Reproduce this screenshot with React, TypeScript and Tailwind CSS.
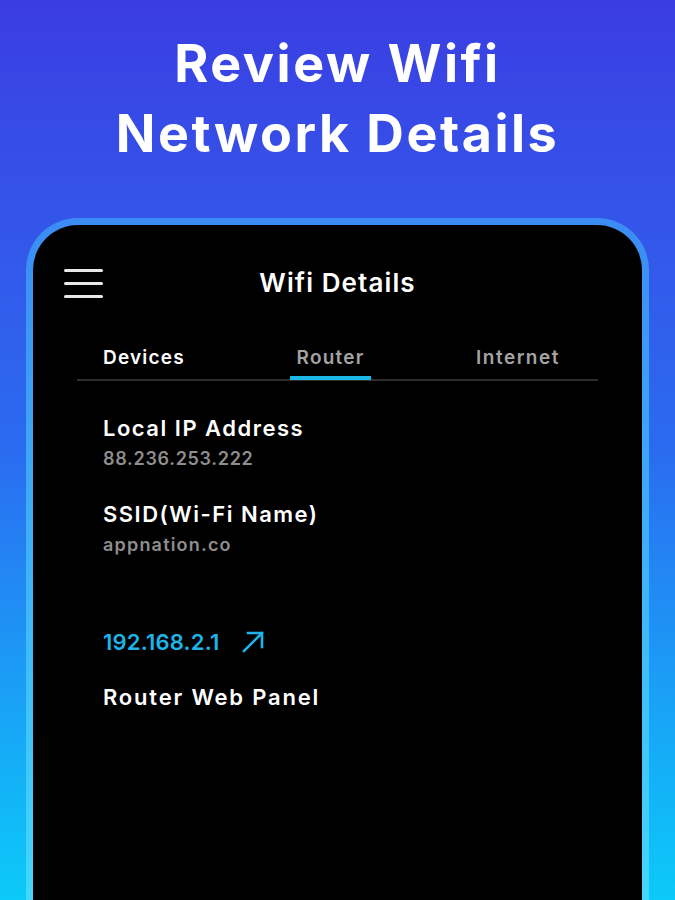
import React from "react";

export default function App() {
  const font = { fontFamily: "Inter, 'Noto Sans', sans-serif" };
  return (
    <div
      className="w-[675px] h-[900px] overflow-hidden flex flex-col items-center bg-gradient-to-b from-[#3a3de2] via-[#2a6bf0] to-[#0ccaf8]"
      style={font}
    >
      <h1 className="mt-[29px] text-center text-white font-bold text-[52px] leading-[70px] tracking-[2.5px]">
        Review Wifi
        <br />
        Network Details
      </h1>
      <div className="mt-[49px] w-[623px] flex-1 rounded-t-[52px] p-[7px] pb-0 bg-gradient-to-b from-[#3b8cf4] to-[#44d6fc]">
        <div className="h-full rounded-t-[45px] bg-black flex flex-col">
          {/* header */}
          <div className="relative h-[62px] mt-[26px] flex items-center justify-center">
            <div className="absolute left-[31px] top-[18px] flex flex-col gap-[10px]">
              <div className="w-[39px] h-[3px] rounded-full bg-[#e8e8e8]" />
              <div className="w-[39px] h-[3px] rounded-full bg-[#e8e8e8]" />
              <div className="w-[39px] h-[3px] rounded-full bg-[#e8e8e8]" />
            </div>
            <span className="text-white text-[26px] font-semibold tracking-[1.1px]">Wifi Details</span>
          </div>
          {/* tabs */}
          <div className="mx-[44px] mt-[22px] flex border-b-2 border-[#2e2e2e] h-[46px]">
            <div className="w-[213px] pl-[26px] pt-[9px] text-white text-[19px] font-semibold tracking-[1.2px]">Devices</div>
            <div className="relative w-[81px] pt-[9px] text-center text-[#a3a3a3] text-[19px] font-semibold tracking-[1.2px]">
              Router
              <div className="absolute left-0 right-0 bottom-[-1px] h-[4px] bg-[#1ab9e6]" />
            </div>
            <div className="pl-[105px] pt-[9px] text-[#a3a3a3] text-[19px] font-semibold tracking-[1.5px]">Internet</div>
          </div>
          {/* content */}
          <div className="pl-[70px] pt-[33px] flex flex-col">
            <div className="text-white text-[22px] font-semibold leading-[28px] tracking-[1.5px]">Local IP Address</div>
            <div className="mt-[4px] text-[#8e8e8e] text-[18px] font-semibold leading-[26px] tracking-[0.7px]">88.236.253.222</div>
            <div className="mt-[28px] text-white text-[22px] font-semibold leading-[28px] tracking-[1.5px]">SSID(Wi-Fi Name)</div>
            <div className="mt-[4px] text-[#8e8e8e] text-[18px] font-semibold leading-[26px] tracking-[1.2px]">appnation.co</div>
            <div className="mt-[70px] flex items-center">
              <span className="text-[#1db4e8] text-[22px] font-semibold leading-[28px] tracking-[0.2px]">192.168.2.1</span>
              <svg className="ml-[22px]" width="24" height="24" viewBox="0 0 24 24" fill="none">
                <path d="M3 21 L21 3 M7 3 H21 V17" stroke="#1db4e8" strokeWidth="2.6" strokeLinecap="square" />
              </svg>
            </div>
            <div className="mt-[27px] text-white text-[22px] font-semibold leading-[28px] tracking-[1.8px]">Router Web Panel</div>
          </div>
        </div>
      </div>
    </div>
  );
}
